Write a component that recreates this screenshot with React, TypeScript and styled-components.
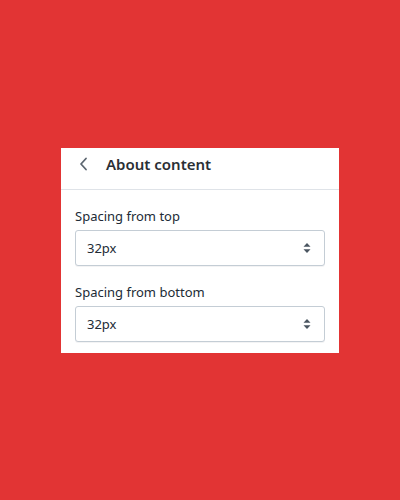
import React, {useState, ChangeEvent} from "react";
import styled, {createGlobalStyle} from "styled-components";

const GlobalStyle = createGlobalStyle`
    html, body {
        margin: 0;
        padding: 0;
        height: 100%;
    }
    body {
        background-color: #e23434;
        font-family: "Noto Sans", "Open Sans", sans-serif;
        color: #212b36;
    }
    #root {
        height: 100%;
    }
`;

type SpacingFieldPropsType = {
    label: string;
    value: string;
    onChange: (value: string) => void;
};

const options = ["0px", "8px", "16px", "24px", "32px", "48px", "64px"];

const SpacingField = ({label, value, onChange}: SpacingFieldPropsType) => {
    const onChangeHandler = (e: ChangeEvent<HTMLSelectElement>) => {
        onChange(e.currentTarget.value);
    }

    return (
        <Field>
            <Label>{label}</Label>
            <SelectWrap>
                <Select value={value} onChange={onChangeHandler}>
                    {options.map(o => <option key={o} value={o}>{o}</option>)}
                </Select>
                <Arrows width="8" height="12" viewBox="0 0 8 12">
                    <path d="M4 1 L7.5 4.8 H0.5 Z" fill="#4a5560"/>
                    <path d="M4 11 L7.5 7.2 H0.5 Z" fill="#4a5560"/>
                </Arrows>
            </SelectWrap>
        </Field>
    );
};

export default function App() {
    const [top, setTop] = useState("32px");
    const [bottom, setBottom] = useState("32px");

    return (
        <>
            <GlobalStyle/>
            <Page>
                <Panel>
                    <Header>
                        <BackButton aria-label="Back">
                            <svg width="9" height="14" viewBox="0 0 9 14">
                                <path d="M7 1.5 L2 7 L7 12.5" fill="none" stroke="#5c6670" strokeWidth="1.8"
                                      strokeLinecap="round" strokeLinejoin="round"/>
                            </svg>
                        </BackButton>
                        <Title>About content</Title>
                    </Header>
                    <Body>
                        <SpacingField label="Spacing from top" value={top} onChange={setTop}/>
                        <SpacingField label="Spacing from bottom" value={bottom} onChange={setBottom}/>
                    </Body>
                </Panel>
            </Page>
        </>
    );
}

const Page = styled.div`
    height: 100%;
    display: flex;
    align-items: center;
    justify-content: center;
`;

const Panel = styled.div`
    width: 278px;
    background-color: #ffffff;
`;

const Header = styled.div`
    display: flex;
    align-items: center;
    gap: 18px;
    padding: 6px 14px 15px 18px;
    border-bottom: 1px solid #dfe3e8;
`;

const BackButton = styled.button`
    display: flex;
    align-items: center;
    padding: 0;
    border: none;
    background: none;
    cursor: pointer;
`;

const Title = styled.h2`
    margin: 0;
    font-size: 15px;
    line-height: 20px;
    font-weight: 600;
    color: #2a2f35;
`;

const Body = styled.div`
    display: flex;
    flex-direction: column;
    gap: 16px;
    padding: 16px 14px 11px;
`;

const Field = styled.div`
    display: flex;
    flex-direction: column;
    gap: 4px;
`;

const Label = styled.label`
    font-size: 13px;
    line-height: 20px;
    color: #212b36;
`;

const SelectWrap = styled.div`
    position: relative;
`;

const Select = styled.select`
    width: 100%;
    height: 36px;
    appearance: none;
    padding: 0 30px 0 11px;
    border: 1px solid #c4cdd5;
    border-radius: 3px;
    background-color: #ffffff;
    font-family: "Noto Sans", "Open Sans", sans-serif;
    font-size: 13px;
    color: #212b36;
    box-shadow: 0 1px 0 rgba(22, 29, 37, 0.05);
`;

const Arrows = styled.svg`
    position: absolute;
    right: 14px;
    top: 12px;
    pointer-events: none;
`;
